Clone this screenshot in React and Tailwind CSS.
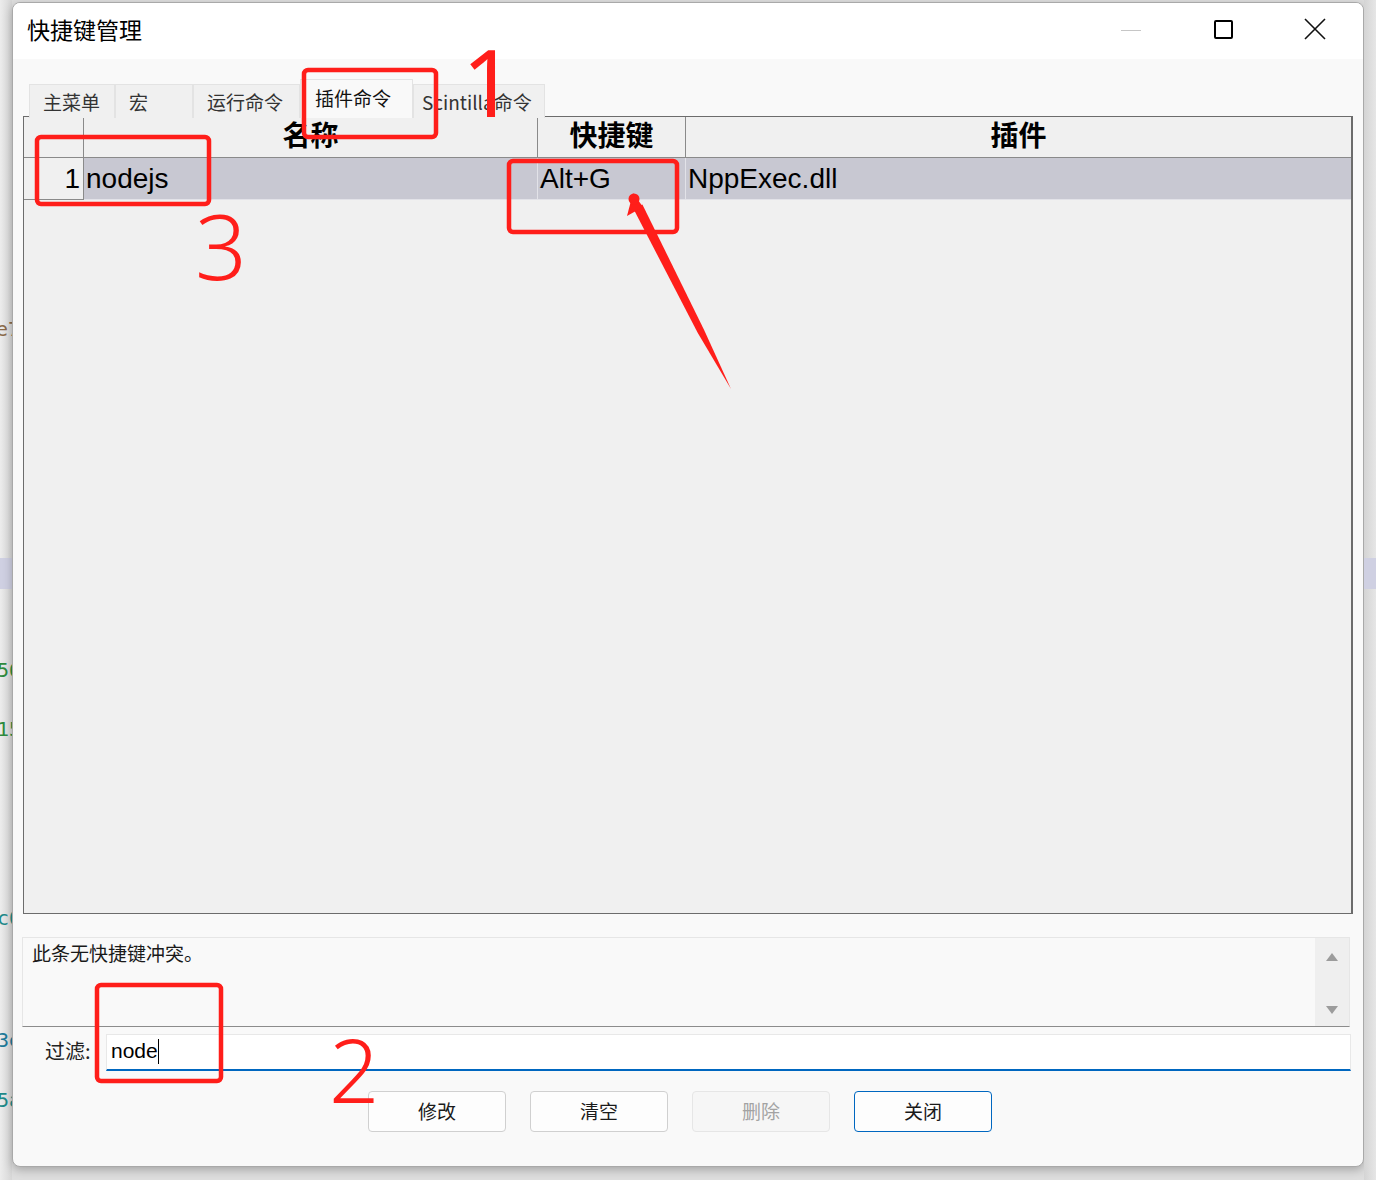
import React from "react";

// 快捷键管理 dialog (Notepad++ shortcut mapper) with red annotations on top

const CJK = "font-['Noto_Sans_CJK_SC',sans-serif]";
const LATIN = "font-['Liberation_Sans','Noto_Sans_CJK_SC',sans-serif]";

const tabs = [
  { label: "主菜单", w: "w-[86px]", pad: "pl-[13px]" },
  { label: "宏", w: "w-[78px]", pad: "pl-[13px]" },
  { label: "运行命令", w: "w-[107px]", pad: "pl-[13px]" },
  { label: "插件命令", w: "w-[113px]", pad: "pl-[14px]", active: true },
  { label: "Scintilla命令", w: "w-[132px]", pad: "pl-[8px]" },
];

const buttons = [
  { label: "修改", cls: "border-[#d0d0d0] bg-[#fdfdfd] text-[#1a1a1a]" },
  { label: "清空", cls: "border-[#d0d0d0] bg-[#fdfdfd] text-[#1a1a1a]" },
  { label: "删除", cls: "border-[#e6e6e6] bg-[#f6f6f6] text-[#a3a3a3]" },
  { label: "关闭", cls: "border-[#0067c0] bg-[#fdfdfd] text-[#1a1a1a]" },
];

function LeftStrip() {
  // bits of the editor visible behind the dialog
  return (
    <div className="w-[12px] h-full shrink-0 flex flex-col overflow-hidden bg-gradient-to-r from-[#ececec] to-[#d6d6d6] font-['DejaVu_Sans_Mono',monospace] text-[20px] leading-none">
      <div className="h-[312px]" />
      <div className="h-[34px] flex items-center -ml-[4px] text-[#8a6a4a]">e7</div>
      <div className="h-[212px]" />
      <div className="h-[31px] bg-[#cfd0e2]" />
      <div className="h-[63px]" />
      <div className="h-[36px] flex items-center -ml-[3px] text-[#2e8b3e]">56</div>
      <div className="h-[23px]" />
      <div className="h-[36px] flex items-center -ml-[3px] text-[#2e8b3e]">15</div>
      <div className="h-[153px]" />
      <div className="h-[36px] flex items-center -ml-[3px] text-[#1e8a8a]">c0</div>
      <div className="h-[86px]" />
      <div className="h-[36px] flex items-center -ml-[3px] text-[#1e7a9a]">3e</div>
      <div className="h-[24px]" />
      <div className="h-[36px] flex items-center -ml-[3px] text-[#1e8a8a]">5a</div>
    </div>
  );
}

function RightStrip() {
  return (
    <div className="w-[12px] h-full shrink-0 flex flex-col bg-gradient-to-r from-[#d4d4d4] to-[#e6e6e6]">
      <div className="h-[558px]" />
      <div className="h-[31px] bg-[#cfd0e2]" />
    </div>
  );
}

function TitleBar() {
  return (
    <div className="h-[56px] bg-white flex items-center shrink-0">
      <div className={`${CJK} text-[23px] text-black pl-[14px] pb-[3px]`}>快捷键管理</div>
      <div className="ml-auto flex h-full pr-[2px]">
        <div className="w-[92px] flex items-center justify-center pb-[2px]">
          <div className="w-[20px] h-px bg-[#c6c6c6]" />
        </div>
        <div className="w-[92px] flex items-center justify-center pb-[4px]">
          <div className="w-[19px] h-[19px] border-2 border-black rounded-[2px]" />
        </div>
        <div className="w-[92px] flex items-center justify-center pb-[4px]">
          <svg width="22" height="22" viewBox="0 0 22 22">
            <path d="M1 1 L21 21 M21 1 L1 21" stroke="#111" strokeWidth="1.6" fill="none" />
          </svg>
        </div>
      </div>
    </div>
  );
}

function Tabs() {
  return (
    <div className="flex items-end pl-[6px] h-[39px] -mb-[2px] relative z-10">
      {tabs.map(t => (
        <div
          key={t.label}
          className={`${t.w} ${t.pad} ${
            t.active
              ? "h-[39px] bg-[#f9f9f9] pt-[5px] text-[#111]"
              : "h-[34px] bg-[#f0f0f0] pt-[4px] text-[#333]"
          } border border-b-0 border-[#e3e3e3] ${CJK} text-[19px] leading-[26px] whitespace-nowrap`}
        >
          {t.label}
        </div>
      ))}
    </div>
  );
}

function Grid() {
  return (
    <div className="h-[798px] border border-r-2 border-[#6c6c6c] bg-[#f0f0f0] flex flex-col">
      {/* header */}
      <div className={`flex h-[41px] border-b border-[#8a8a8a] ${CJK} text-[28px] font-semibold text-black`}>
        <div className="w-[60px] border-r border-[#8a8a8a]" />
        <div className="w-[454px] border-r border-[#8a8a8a] flex items-center justify-center pb-[6px]">名称</div>
        <div className="w-[148px] border-r border-[#8a8a8a] flex items-center justify-center pb-[6px]">快捷键</div>
        <div className="flex-1 flex items-center justify-center pb-[6px]">插件</div>
      </div>
      {/* row 1 */}
      <div className={`flex h-[42px] ${LATIN} text-[28px] text-black`}>
        <div className="w-[60px] border-r border-b border-[#8a8a8a] bg-[#f0f0f0] flex items-center justify-end pr-[3px]">1</div>
        <div className="flex-1 flex bg-[#c8c8d2] border-b border-[#e2e2e8]">
          <div className="w-[454px] border-r border-[#e2e2e8] flex items-center pl-[2px]">nodejs</div>
          <div className="w-[148px] border-r border-[#e2e2e8] flex items-center pl-[2px]">Alt+G</div>
          <div className="flex-1 flex items-center pl-[2px]">NppExec.dll</div>
        </div>
      </div>
    </div>
  );
}

function StatusBox() {
  return (
    <div className="mt-[23px] -ml-px mr-[3px] h-[90px] flex border border-[#e6e6e6] border-b-[#8c8c8c] bg-[#f9f9f9]">
      <div className={`flex-1 pl-[9px] ${CJK} text-[19px] leading-[30px] text-[#1a1a1a]`}>此条无快捷键冲突。</div>
      <div className="w-[34px] bg-[#efefef] flex flex-col items-center justify-between pt-[15px] pb-[12px]">
        <svg width="12" height="8" viewBox="0 0 12 8"><polygon points="6,0 12,8 0,8" fill="#9c9c9c" /></svg>
        <svg width="12" height="8" viewBox="0 0 12 8"><polygon points="0,0 12,0 6,8" fill="#9c9c9c" /></svg>
      </div>
    </div>
  );
}

function FilterRow() {
  return (
    <div className="mt-[7px] flex items-center h-[37px]">
      <div className={`w-[83px] pl-[22px] pb-[3px] ${CJK} text-[20px] text-[#222]`}>过滤:</div>
      <div className="flex-1 mr-[2px] h-[37px] bg-white border border-[#e8e8e8] border-b-2 border-b-[#0067c0] flex items-center pl-[4px] pb-[2px]">
        <span className={`${LATIN} text-[21px] text-black`}>node</span>
        <span className="inline-block w-px h-[25px] bg-black" />
      </div>
    </div>
  );
}

function ButtonRow() {
  return (
    <div className="mt-[20px] flex gap-[24px] pl-[345px]">
      {buttons.map(b => (
        <div
          key={b.label}
          className={`w-[138px] h-[41px] rounded-[4px] border ${b.cls} flex items-center justify-center ${CJK} text-[19px]`}
        >
          {b.label}
        </div>
      ))}
    </div>
  );
}

function Annotations() {
  const red = "#ff1e1a";
  return (
    <svg className="absolute left-0 top-0 z-20 pointer-events-none" width="1376" height="1180" viewBox="0 0 1376 1180">
      <g fill="none" stroke={red} strokeWidth="4.5">
        <rect x="304" y="70" width="132" height="67" rx="4" />
        <rect x="37" y="137" width="172" height="67" rx="4" />
        <rect x="509" y="161" width="168" height="71" rx="4" />
        <rect x="97" y="985" width="124" height="96" rx="4" />
      </g>
      <g fill={red} fontFamily="'Noto Sans', sans-serif" fontWeight="300">
        <text x="462" y="117" fontSize="93" fontWeight="400">1</text>
        <text x="195" y="280" fontSize="91">3</text>
        <text x="329" y="1103" fontSize="88">2</text>
      </g>
      <g fill={red}>
        <polygon points="642.4,204.4 704,329.8 731,389 697.8,333 633.4,208.8" />
        <polygon points="627,216 633,193 643,207" />
        <circle cx="634" cy="199" r="5.5" />
      </g>
    </svg>
  );
}

export default function App() {
  return (
    <div className="relative w-[1376px] h-[1180px] overflow-hidden bg-[#dedede] flex">
      <LeftStrip />
      <div className="w-[1352px] h-[1165px] mt-[2px] shrink-0 flex flex-col rounded-[8px] overflow-hidden border border-[#a9a9a9] bg-[#f9f9f9] shadow-[0_3px_10px_rgba(0,0,0,0.25)]">
        <TitleBar />
        <div className="flex-1 flex flex-col px-[10px] pt-[20px]">
          <Tabs />
          <Grid />
          <StatusBox />
          <FilterRow />
          <ButtonRow />
        </div>
      </div>
      <RightStrip />
      <Annotations />
    </div>
  );
}
